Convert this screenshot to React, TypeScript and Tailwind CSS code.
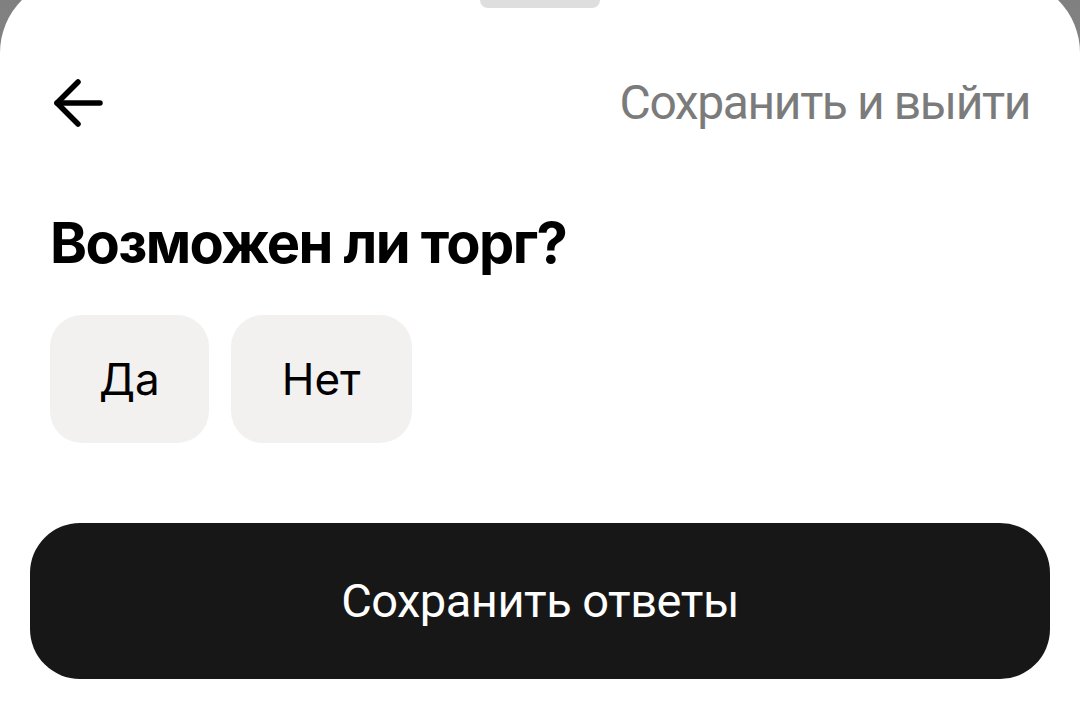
export default function App() {
  return (
    <div className="h-[727px] w-[1080px] overflow-hidden bg-gradient-to-b from-[#808080] to-[#a0a0a0] font-['Roboto',sans-serif]">
      <div className="-mt-[22px] flex h-[749px] flex-col rounded-t-[75px] bg-white">
        <div className="mx-auto mt-[10px] h-[20px] w-[120px] rounded-[8px] bg-[#dedede]" />

        <div className="mt-[65px] flex h-[60px] items-center justify-between pl-[52px] pr-[50px]">
          <button className="h-[52px] w-[52px]">
            <svg width="52" height="52" viewBox="0 0 52 52" fill="none" stroke="#000" strokeWidth="5.5" strokeLinecap="round" strokeLinejoin="round">
              <path d="M5 26H48" />
              <path d="M26 5L5 26L26 47" />
            </svg>
          </button>
          <span className="text-[48px] leading-none tracking-[-1.4px] text-[#7b7b7b]">Сохранить и выйти</span>
        </div>

        <h1 className="mt-[78px] pl-[50px] font-['Inter',sans-serif] text-[56px] font-bold leading-[64px] tracking-[-1.6px] text-black">
          Возможен ли торг?
        </h1>

        <div className="mt-[40px] flex gap-[22px] pl-[50px]">
          <button className="flex h-[128px] items-center rounded-[32px] bg-[#f2f1f0] px-[49px] font-['Inter',sans-serif] text-[44px] text-black">Да</button>
          <button className="flex h-[128px] items-center rounded-[32px] bg-[#f2f1f0] px-[51px] font-['Inter',sans-serif] text-[44px] text-black">Нет</button>
        </div>

        <button className="mx-[30px] mt-[80px] flex h-[156px] items-center justify-center rounded-[50px] bg-[#171717] text-[47px] tracking-[-0.5px] text-white">
          Сохранить ответы
        </button>
      </div>
    </div>
  );
}
